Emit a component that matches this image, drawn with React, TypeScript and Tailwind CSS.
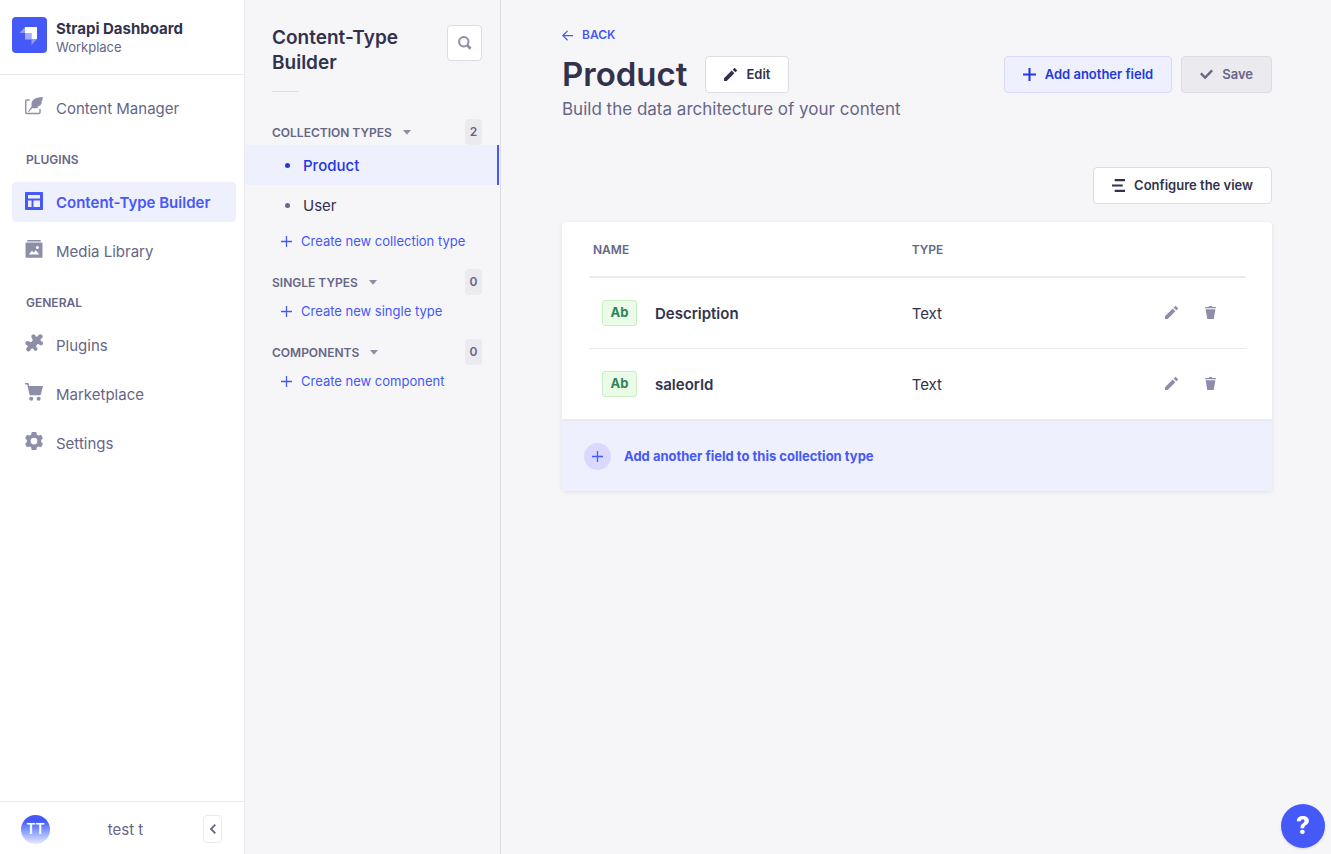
import type { ReactNode } from "react";

type IconProps = { className?: string };

function Svg({ className, viewBox = "0 0 24 24", children }: IconProps & { viewBox?: string; children: ReactNode }) {
  return (
    <svg className={className} viewBox={viewBox} fill="currentColor" aria-hidden="true">
      {children}
    </svg>
  );
}

const Pencil = ({ className }: IconProps) => (
  <Svg className={className}>
    <path d="M23.604 3.514c.528.528.528 1.36 0 1.887l-2.622 2.607-4.99-4.99L18.6.396a1.322 1.322 0 011.887 0l3.118 3.118zM0 24v-4.99l14.2-14.2 4.99 4.99L4.99 24H0z" />
  </Svg>
);

const Trash = ({ className }: IconProps) => (
  <Svg className={className}>
    <path d="M3.236 6.149a.2.2 0 00-.197.233L6 24h12l2.96-17.618a.2.2 0 00-.196-.233H3.236zM21.8 1.983c.11 0 .2.09.2.2v1.584a.2.2 0 01-.2.2H2.2a.2.2 0 01-.2-.2V2.183c0-.11.09-.2.2-.2h5.511c.9 0 1.631-1.09 1.631-1.983h5.316c0 .894.73 1.983 1.631 1.983H21.8z" />
  </Svg>
);

const Plus = ({ className }: IconProps) => (
  <Svg className={className}>
    <path d="M24 13.6a.3.3 0 01-.3.3h-9.8v9.8a.3.3 0 01-.3.3h-3.2a.3.3 0 01-.3-.3v-9.8H.3a.3.3 0 01-.3-.3v-3.2a.3.3 0 01.3-.3h9.8V.3a.3.3 0 01.3-.3h3.2a.3.3 0 01.3.3v9.8h9.8a.3.3 0 01.3.3v3.2z" />
  </Svg>
);

const ThinPlus = ({ className }: IconProps) => (
  <Svg className={className}>
    <path d="M10.6 0h2.8v10.6H24v2.8H13.4V24h-2.8V13.4H0v-2.8h10.6z" />
  </Svg>
);

const Check = ({ className }: IconProps) => (
  <Svg className={className}>
    <path d="M20.727 2.97a.2.2 0 01.286 0l2.85 2.89a.2.2 0 010 .28L9.554 20.854a.2.2 0 01-.285 0l-9.13-9.243a.2.2 0 010-.281l2.85-2.892a.2.2 0 01.284 0l6.14 6.209L20.726 2.97z" />
  </Svg>
);

const ListLines = ({ className }: IconProps) => (
  <Svg className={className} viewBox="0 0 13 13">
    <path d="M2.700 0H13v2.200H2.700zM0 5.400h10.700v2.200H0zM2.700 10.800H13V13H2.700z" />
  </Svg>
);

const ArrowLeft = ({ className }: IconProps) => (
  <Svg className={className}>
    <path d="M24 13.3a.2.2 0 01-.2.2H5.1l7.9 7.9-1.9 1.9L0 12.1 11.1.9 13 2.800 5.100 10.700h18.700a.2.2 0 01.2.2z" />
  </Svg>
);

const CaretDown = ({ className }: IconProps) => (
  <Svg className={className} viewBox="0 0 8 5">
    <path d="M.3 0h7.400a.2.2 0 01.15.35L4.200 4.400a.3.3 0 01-.4 0L.15.350A.2.2 0 01.3 0z" />
  </Svg>
);

const ChevronLeft = ({ className }: IconProps) => (
  <svg className={className} viewBox="0 0 8 10" fill="none" stroke="currentColor" strokeWidth="1.800" aria-hidden="true">
    <path d="M6.300.7L2 5l4.300 4.300" />
  </svg>
);

const Search = ({ className }: IconProps) => (
  <svg className={className} viewBox="0 0 14 14" fill="none" stroke="currentColor" aria-hidden="true">
    <circle cx="5.800" cy="5.800" r="4.700" strokeWidth="2" />
    <path d="M9.200 9.300l3.400 3.400" strokeWidth="2.800" />
  </svg>
);

const Feather = ({ className }: IconProps) => (
  <Svg className={className}>
    <path d="M24 0c-6.500.2-11.500 1.500-14 5-1.500 2.200-1.600 5-1.200 7.800L4 19.300l1 .9 4.800-5.400c3.200.6 6.700.3 8.900-1.700l-2.600-.8 4.200-.9c1.300-1.500 2-3.200 2.300-5l-1.800-.7 2.200-.7c.1-1.700.4-3.400 1-5z" />
    <path d="M6.500 3H2.600C1.100 3 0 4.100 0 5.600v14.800C0 21.900 1.100 23 2.600 23h15.800c1.500 0 2.600-1.100 2.600-2.600V16h-1.900v4.400c0 .5-.2.7-.7.7H2.600c-.5 0-.7-.2-.7-.7V5.600c0-.5.2-.7.700-.7h3.200z" />
  </Svg>
);

const LayoutIcon = ({ className }: IconProps) => (
  <Svg className={className}>
    <path
      fillRule="evenodd"
      d="M1 0h22a1 1 0 011 1v22a1 1 0 01-1 1H1a1 1 0 01-1-1V1a1 1 0 011-1zm3 4v4.700h16V4zm0 7.300V20h4.700v-8.700zm7.300 0V20H20v-8.700z"
    />
  </Svg>
);

const Landscape = ({ className }: IconProps) => (
  <Svg className={className}>
    <path d="M3 0h18v2H3z" />
    <path
      fillRule="evenodd"
      d="M1.500 3.400h21a.8.8 0 01.8.8v18.600a.8.8 0 01-.8.800h-21a.8.8 0 01-.8-.8V4.200a.8.8 0 01.8-.8zM5 19.300h14l-4.600-5.800-2.600 3-2.500-2.300zM16.500 8a2 2 0 100 4 2 2 0 000-4z"
    />
  </Svg>
);

const Puzzle = ({ className }: IconProps) => (
  <Svg className={className}>
    <path d="M8.500 3.600C8.400 1.600 10 .2 11.900.500c1.500.3 2.300 1.500 2.400 2.800l1.600.3c1.200-.2 1.500-1.300 2.300-2.300C19.400-.1 21.500 0 22.700 1.300c1.200 1.300 1.200 3.200-.1 4.400-.9.800-2 .9-2 2 0 1 .5 1.800 1.200 2 1.400.2 2.200 1.200 2.200 2.500 0 1.900-1.600 3-3.300 2.800-1.600-.2-2-1.600-3.100-1.700-1.400 0-2 1.300-2.500 2.300-.6 1.300.1 1.800.9 2.600.9 1 .8 2.500-.1 3.400-1.100 1.200-2.900 1-3.800-.1-.7-.9-.7-1.900-1.700-2.200-1.400-.3-2.400.2-2.800 1.500-.3 1.200-1.100 2.400-2.700 2.500-1.900.2-3.400-1.100-3.400-2.900 0-1.400.9-2.200 1.700-3 .7-.8.5-1.800-.4-2.300C1.400 14.500.5 13.800.5 12.300c0-1.700 1.300-2.900 3-2.900 1.500 0 2.200 1.200 3.300 1.400 1.200.1 2.700-.9 3.300-2.200.5-1-.1-1.800-.7-2.300-.6-.6-.9-1.700-.9-2.700z" />
  </Svg>
);

const Cart = ({ className }: IconProps) => (
  <Svg className={className}>
    <path d="M0 0h4.600l1 4H24l-2.700 10.600c-.3 1.200-.9 1.700-2 1.700H7.700c-1 0-1.600-.5-1.900-1.600L3 2H0z" />
    <circle cx="8.300" cy="21" r="2.700" />
    <circle cx="18.200" cy="21" r="2.700" />
  </Svg>
);

const Cog = ({ className }: IconProps) => (
  <Svg className={className}>
    <path
      fillRule="evenodd"
      d="M9 0h6l.9 3.700 2 1.100 3.500-1.200 2.600 4.600-2.500 2.500v2.600l2.500 2.500-2.600 4.600-3.500-1.200-2 1.100L15 24H9l-.9-3.700-2-1.100-3.500 1.200L0 15.800l2.500-2.500v-2.600L0 8.200l2.600-4.600 3.500 1.200 2-1.100zM12 7.500a4.500 4.500 0 100 9 4.500 4.500 0 000-9z"
    />
  </Svg>
);

function Logo() {
  return (
    <svg className="h-9 w-[35px] shrink-0 rounded" viewBox="0 0 35 36" aria-hidden="true">
      <rect width="35" height="36" fill="#4558f8" />
      <path d="M13 10h11.500c.3 0 .5.200.5.500V22h-5.500v-6H13z" fill="#fff" />
      <path d="M13 10v6H7.500z" fill="#fff" opacity=".4" />
      <path d="M13 16h6.500v6.500h-6a.5.5 0 01-.5-.5z" fill="#fff" opacity=".5" />
      <path d="M19.500 22H25l-5.500 6z" fill="#fff" opacity=".4" />
    </svg>
  );
}

function NavItem({ icon, label, active = false }: { icon: ReactNode; label: string; active?: boolean }) {
  return (
    <a
      href="#"
      aria-current={active ? "page" : undefined}
      className={
        active
          ? "flex h-10 items-center gap-[13px] rounded bg-[#eef0fe] px-3 pt-0.5 text-[15px] font-semibold text-[#4558f8]"
          : "flex h-10 items-center gap-[13px] rounded px-3 pt-0.5 text-[15px] text-[#666687]"
      }
    >
      <span className={active ? "-mt-1 ml-px" : "-mt-1.5 ml-px text-[#8e8ea9]"}>{icon}</span>
      {label}
    </a>
  );
}

function NavSection({ title, children }: { title: string; children: ReactNode }) {
  return (
    <section className="mt-6">
      <h2 className="px-3.5 pb-3.5 text-xs leading-4 font-semibold text-[#666687] uppercase">{title}</h2>
      <div className="flex flex-col gap-[9px]">{children}</div>
    </section>
  );
}

function MainNav() {
  return (
    <nav className="flex w-[245px] shrink-0 flex-col border-r border-[#eaeaef] bg-white">
      <div className="flex h-[75px] items-start gap-[9px] border-b border-[#eaeaef] px-3 pt-[17px]">
        <Logo />
        <div>
          <p className="mt-0.5 text-[15px] leading-5 font-bold text-[#32324d]">Strapi Dashboard</p>
          <p className="text-[13px] leading-4 text-[#666687]">Workplace</p>
        </div>
      </div>
      <div className="flex-1 pt-[13px] pr-2 pl-3">
        <NavItem icon={<Feather className="size-[18px]" />} label="Content Manager" />
        <NavSection title="Plugins">
          <NavItem active icon={<LayoutIcon className="size-[18px]" />} label="Content-Type Builder" />
          <NavItem icon={<Landscape className="size-[18px]" />} label="Media Library" />
        </NavSection>
        <NavSection title="General">
          <NavItem icon={<Puzzle className="size-[18px]" />} label="Plugins" />
          <NavItem icon={<Cart className="size-[18px]" />} label="Marketplace" />
          <NavItem icon={<Cog className="size-[18px]" />} label="Settings" />
        </NavSection>
      </div>
      <div className="flex h-[53px] items-center justify-between border-t border-[#eaeaef] pt-0.5 pr-[22px] pl-[21px]">
        <span className="flex size-[29px] items-center justify-center rounded-full bg-linear-to-b from-[#4558f8] from-20% to-[#eaeaff] text-sm font-semibold text-white">
          TT
        </span>
        <span className="pt-0.5 pr-0.5 text-[15px] text-[#666687]">test t</span>
        <button
          type="button"
          aria-label="Collapse the navbar"
          className="flex h-7 w-[19px] items-center justify-center rounded border border-[#eaeaef] text-[#666687]"
        >
          <ChevronLeft className="h-2.5 w-2" />
        </button>
      </div>
    </nav>
  );
}

function TypeSection({ title, count, link, children }: { title: string; count: number; link: string; children?: ReactNode }) {
  return (
    <section>
      <div className="flex h-[26px] items-center justify-between pr-[17px] pl-[27px]">
        <button type="button" className="flex items-center gap-[11px] pt-0.5 text-xs font-semibold text-[#666687] uppercase">
          {title}
          <CaretDown className="mb-0.5 h-[5px] w-2 text-[#8e8ea9]" />
        </button>
        <span className="flex h-[26px] w-[17px] items-center justify-center rounded bg-[#eaeaef] text-xs font-semibold text-[#666687]">
          {count}
        </span>
      </div>
      {children}
      <a href="#" className="flex h-[33px] items-center gap-[9px] pl-9 text-[13px] text-[#4558f8]">
        <ThinPlus className="size-[11px]" />
        {link}
      </a>
    </section>
  );
}

function SubNav() {
  return (
    <nav className="w-64 shrink-0 border-r border-[#dcdce4] bg-[#f6f6f9] pr-px">
      <div className="flex items-start justify-between pt-[25px] pr-[17px] pl-[27px]">
        <h2 className="text-[19px] leading-[25px] font-semibold text-[#32324d]">Content-Type Builder</h2>
        <button
          type="button"
          aria-label="Search"
          className="flex h-9 w-[35px] shrink-0 items-center justify-center rounded border border-[#dcdce4] bg-white text-[#8e8ea9]"
        >
          <Search className="size-3.5" />
        </button>
      </div>
      <div className="mt-4 ml-[27px] h-px w-[26px] bg-[#dcdce4]" />
      <div className="mt-[27px] flex flex-col gap-[11px]">
        <TypeSection title="Collection types" count={2} link="Create new collection type">
          <ul className="text-[15px]">
            <li>
              <a
                href="#"
                aria-current="page"
                className="flex h-10 items-center gap-[13px] border-r-2 border-[#4558f8] bg-[#eef0fe] pt-0.5 pl-10 font-medium text-[#2438dd]"
              >
                <span className="-mt-0.5 size-[5px] rounded-full bg-[#2438dd]" />
                Product
              </a>
            </li>
            <li>
              <a href="#" className="flex h-10 items-center gap-[13px] pt-0.5 pl-10 text-[#32324d]">
                <span className="-mt-0.5 size-[5px] rounded-full bg-[#666687]" />
                User
              </a>
            </li>
          </ul>
        </TypeSection>
        <TypeSection title="Single types" count={0} link="Create new single type" />
        <TypeSection title="Components" count={0} link="Create new component" />
      </div>
    </nav>
  );
}

const fields = [
  { name: "Description", type: "Text" },
  { name: "saleorId", type: "Text" },
];

function FieldTable() {
  return (
    <div className="mt-[18px] overflow-hidden rounded bg-white shadow-[0_1px_4px_rgba(33,33,52,0.1)]">
      <div className="pr-[26px] pl-[27px]">
        <table className="w-full table-fixed border-collapse text-left text-[#32324d]">
          <thead>
            <tr className="h-[55px] border-b-2 border-[#eaeaef] text-xs text-[#666687] uppercase">
              <th scope="col" className="w-[48.500%] pt-0.5 pl-1 font-semibold">
                Name
              </th>
              <th scope="col" className="pt-0.5 pl-1 font-semibold">
                Type
              </th>
              <th scope="col" aria-label="Actions" className="w-28" />
            </tr>
          </thead>
          <tbody>
            {fields.map((field) => (
              <tr key={field.name} className="h-[71px] border-b border-[#eaeaef] text-[15px] last:border-b-0">
                <td className="pl-[13px]">
                  <div className="flex items-center gap-[18px] font-semibold">
                    <span className="flex h-[26px] w-[35px] items-center justify-center rounded-[3px] border border-[#c6f0c2] bg-[#eafbe7] text-[13px] font-bold text-[#2f8458]">
                      Ab
                    </span>
                    <span className="pt-0.5">{field.name}</span>
                  </div>
                </td>
                <td className="pt-0.5 pl-1">{field.type}</td>
                <td>
                  <div className="flex justify-end gap-[26px] pr-[29px] text-[#8e8ea9]">
                    <button type="button" aria-label={`Edit ${field.name}`}>
                      <Pencil className="size-[13px]" />
                    </button>
                    <button type="button" aria-label={`Delete ${field.name}`}>
                      <Trash className="size-[13px]" />
                    </button>
                  </div>
                </td>
              </tr>
            ))}
          </tbody>
        </table>
      </div>
      <button
        type="button"
        className="flex h-[72px] w-full items-center gap-[13px] border-t-2 border-[#eaeaef] bg-[#eef0fe] pl-[22px] text-[13px] font-bold text-[#4558f8]"
      >
        <span className="flex size-[27px] items-center justify-center rounded-full bg-[#d9d8ff]">
          <ThinPlus className="size-[11px]" />
        </span>
        <span className="pt-0.5">Add another field to this collection type</span>
      </button>
    </div>
  );
}

const buttonBase = "flex h-[37px] items-center gap-[9px] rounded border px-[18px] text-[13px] font-semibold";

export default function App() {
  return (
    <div className="flex min-h-screen bg-[#f6f6f9] font-['Inter',sans-serif] text-[#32324d]">
      <MainNav />
      <SubNav />
      <main className="min-w-0 flex-1 pt-[27px] pr-[59px] pl-[61px]">
        <div className="flex">
          <a href="#" className="flex h-4 items-center gap-[9px] text-xs font-semibold text-[#4558f8] uppercase">
            <ArrowLeft className="size-[11px]" />
            Back
          </a>
        </div>
        <div className="mt-[13px] flex items-center justify-between">
          <div className="flex items-center gap-[18px]">
            <h1 className="text-[33px] leading-[37px] font-semibold">Product</h1>
            <button type="button" className={`${buttonBase} border-[#dcdce4] bg-white`}>
              <Pencil className="size-[13px]" />
              Edit
            </button>
          </div>
          <div className="flex gap-[9px]">
            <button type="button" className={`${buttonBase} border-[#d9d8ff] bg-[#eef0fe] text-[#2438dd]`}>
              <Plus className="size-[13px]" />
              Add another field
            </button>
            <button type="button" disabled className={`${buttonBase} border-[#dcdce4] bg-[#eaeaef] text-[#666687]`}>
              <Check className="size-[13px]" />
              Save
            </button>
          </div>
        </div>
        <p className="mt-1 text-[17px] leading-6 text-[#666687]">Build the data architecture of your content</p>
        <div className="mt-[46px] flex justify-end">
          <button type="button" className={`${buttonBase} border-[#dcdce4] bg-white`}>
            <ListLines className="size-[13px]" />
            Configure the view
          </button>
        </div>
        <FieldTable />
      </main>
      <button
        type="button"
        aria-label="Help"
        className="fixed right-1.5 bottom-1.5 flex size-11 items-center justify-center rounded-full bg-[#4558f8] text-2xl font-extrabold text-white shadow-sm"
      >
        ?
      </button>
    </div>
  );
}
